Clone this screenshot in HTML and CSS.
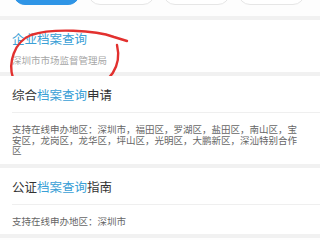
FILE: index.html
```html
<!DOCTYPE html>
<html lang="zh">
<head>
<meta charset="utf-8">
<link rel="stylesheet" href="styles.css">
</head>
<body>
<div class="page">
  <div class="tabs">
    <span class="tab tab-active"></span>
    <span class="tab"></span>
    <span class="tab"></span>
    <span class="tab"></span>
  </div>
  <div class="band"></div>
  <div class="card card-first">
    <div class="title hl">企业档案查询</div>
    <div class="sub">深圳市市场监督管理局</div>
    <svg class="mark" width="140" height="80" viewBox="0 0 140 80">
      <path d="M127 25 L114 21 C95 14 52 12 31 19 C14 26 8 47 13 62 C20 76 58 79 89 73 C110 68 122 50 117 29" fill="none" stroke="#e2312f" stroke-width="2.4" stroke-linecap="round"/>
    </svg>
  </div>
  <div class="band"></div>
  <div class="card">
    <div class="title">综合<span class="hl">档案查询</span>申请</div>
    <div class="body">支持在线申办地区：深圳市，福田区，罗湖区，盐田区，南山区，宝安区，龙岗区，龙华区，坪山区，光明区，大鹏新区，深汕特别合作区</div>
  </div>
  <div class="band"></div>
  <div class="card">
    <div class="title">公证<span class="hl">档案查询</span>指南</div>
    <div class="body">支持在线申办地区：深圳市</div>
  </div>
  <div class="band"></div>
</div>
</body>
</html>
```
FILE: styles.css
```css
html, body {
  margin: 0;
  padding: 0;
  background: #ffffff;
}
.page {
  width: 320px;
  height: 240px;
  overflow: hidden;
  font-family: "Noto Sans CJK SC", "Noto Sans", sans-serif;
  background: #fdfdfd;
}
.tabs {
  display: flex;
  gap: 8px;
  padding: 0 14px 0 13px;
  height: 16px;
  align-items: flex-start;
  overflow: hidden;
}
.tab {
  flex: 0 0 67px;
  height: 25px;
  margin-top: -20px;
  border-radius: 12px;
  border: 1px solid #e6e6e6;
  box-sizing: border-box;
  background: #ffffff;
}
.tab-active {
  background: #2f95e6;
  border-color: #2f95e6;
}
.band {
  height: 4px;
  background: #f1f1f1;
}
.card {
  background: #ffffff;
  padding-left: 12px;
  position: relative;
}
.card-first {
  padding-top: 10px;
  padding-bottom: 6px;
}
.title {
  font-size: 12.5px;
  line-height: 18px;
  color: #333333;
  padding: 10px 0 8px;
  border-bottom: 1px solid #efefef;
}
.card-first .title {
  padding: 0;
  border-bottom: none;
}
.hl {
  color: #3a9fd6;
}
.sub {
  margin-top: 6px;
  font-size: 9.5px;
  line-height: 12px;
  color: #a6a6a6;
}
.body {
  width: 287px;
  font-size: 9.5px;
  line-height: 10.5px;
  color: #666666;
  padding: 11px 0 8px;
}
.mark {
  position: absolute;
  left: 0;
  top: -4px;
}
```
